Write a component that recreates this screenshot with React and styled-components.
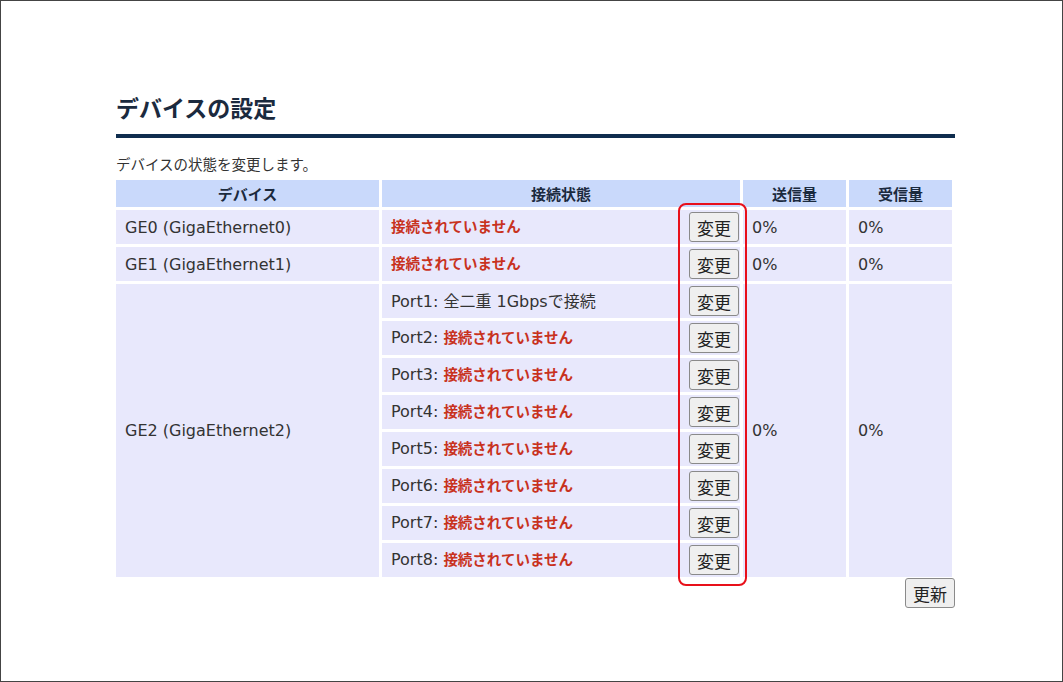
import React from 'react';
import styled, { createGlobalStyle } from 'styled-components';

const GlobalStyle = createGlobalStyle`
  html, body {
    margin: 0;
    padding: 0;
    background: #ffffff;
  }
  body {
    font-family: "DejaVu Sans", "Noto Sans CJK JP", sans-serif;
    color: #333333;
  }
`;

const Page = styled.div`
  position: relative;
  box-sizing: border-box;
  width: 1063px;
  height: 682px;
  border: 1px solid #444444;
  padding: 84px 0 0 115px;
`;

const Content = styled.div`
  width: 839px;
`;

const Title = styled.h1`
  margin: 0;
  font-family: "Noto Sans CJK JP", sans-serif;
  font-size: 23px;
  font-weight: bold;
  line-height: 44px;
  color: #1b2a3e;
  border-bottom: 4px solid #0f2d4e;
  padding-bottom: 5px;
`;

const Lead = styled.p`
  margin: 16px 0 0;
  font-family: "Noto Sans CJK JP", sans-serif;
  font-size: 14.5px;
  line-height: 20px;
  color: #333333;
`;

const Table = styled.table`
  border-collapse: separate;
  border-spacing: 3px;
  margin: 3px 0 0 -3px;
  width: 842px;
  table-layout: fixed;
`;

const Th = styled.th`
  background: #c9d9fb;
  height: 27px;
  padding: 0;
  font-family: "Noto Sans CJK JP", sans-serif;
  font-size: 15px;
  font-weight: bold;
  color: #1b2a3e;
  text-align: center;
`;

const Td = styled.td`
  background: #e8e8fc;
  height: 34px;
  padding: 0 0 0 9px;
  font-size: 16px;
  color: #333333;
  vertical-align: middle;
`;

const StatusCell = styled(Td)`
  padding-right: 1px;
`;

const StatusLine = styled.div`
  display: flex;
  align-items: center;
  justify-content: space-between;
`;

const Status = styled.span`
  padding-bottom: 3px;
`;

const Down = styled.span`
  font-family: "Noto Sans CJK JP", sans-serif;
  font-size: 14.5px;
  color: #c8321e;
  font-weight: bold;
`;

const Button = styled.button`
  box-sizing: border-box;
  width: 50px;
  height: 30px;
  padding: 0;
  background: #efefef;
  border: 1px solid #8a8a8a;
  border-radius: 3px;
  font-family: "Noto Sans CJK JP", sans-serif;
  font-size: 17px;
  color: #222222;
`;

const Footer = styled.div`
  display: flex;
  justify-content: flex-end;
  margin-top: -2px;
`;

const Highlight = styled.div`
  position: absolute;
  left: 677px;
  top: 202px;
  width: 65px;
  height: 379px;
  border: 2px solid #e8101a;
  border-radius: 8px;
  pointer-events: none;
`;

const rows = [
  { device: 'GE0 (GigaEthernet0)', ports: [{ label: '', up: false }] },
  { device: 'GE1 (GigaEthernet1)', ports: [{ label: '', up: false }] },
  {
    device: 'GE2 (GigaEthernet2)',
    ports: [1, 2, 3, 4, 5, 6, 7, 8].map((n) => ({ label: `Port${n}: `, up: n === 1 })),
  },
];

const StatusContent = ({ port }) => (
  <StatusLine>
    <Status>
      {port.label}
      {port.up ? '全二重 1Gbpsで接続' : <Down>接続されていません</Down>}
    </Status>
    <Button type="button">変更</Button>
  </StatusLine>
);

const App = () => (
  <>
    <GlobalStyle />
    <Page>
      <Content>
        <Title>デバイスの設定</Title>
        <Lead>デバイスの状態を変更します。</Lead>
        <Table>
          <colgroup>
            <col style={{ width: 263 }} />
            <col style={{ width: 358 }} />
            <col style={{ width: 103 }} />
            <col style={{ width: 103 }} />
          </colgroup>
          <thead>
            <tr>
              <Th>デバイス</Th>
              <Th>接続状態</Th>
              <Th>送信量</Th>
              <Th>受信量</Th>
            </tr>
          </thead>
          <tbody>
            {rows.map((row) => row.ports.map((port, i) => (
              <tr key={row.device + i}>
                {i === 0 && <Td rowSpan={row.ports.length}>{row.device}</Td>}
                <StatusCell><StatusContent port={port} /></StatusCell>
                {i === 0 && <Td rowSpan={row.ports.length}>0%</Td>}
                {i === 0 && <Td rowSpan={row.ports.length}>0%</Td>}
              </tr>
            )))}
          </tbody>
        </Table>
        <Footer>
          <Button type="button">更新</Button>
        </Footer>
      </Content>
      <Highlight />
    </Page>
  </>
);

export default App;
